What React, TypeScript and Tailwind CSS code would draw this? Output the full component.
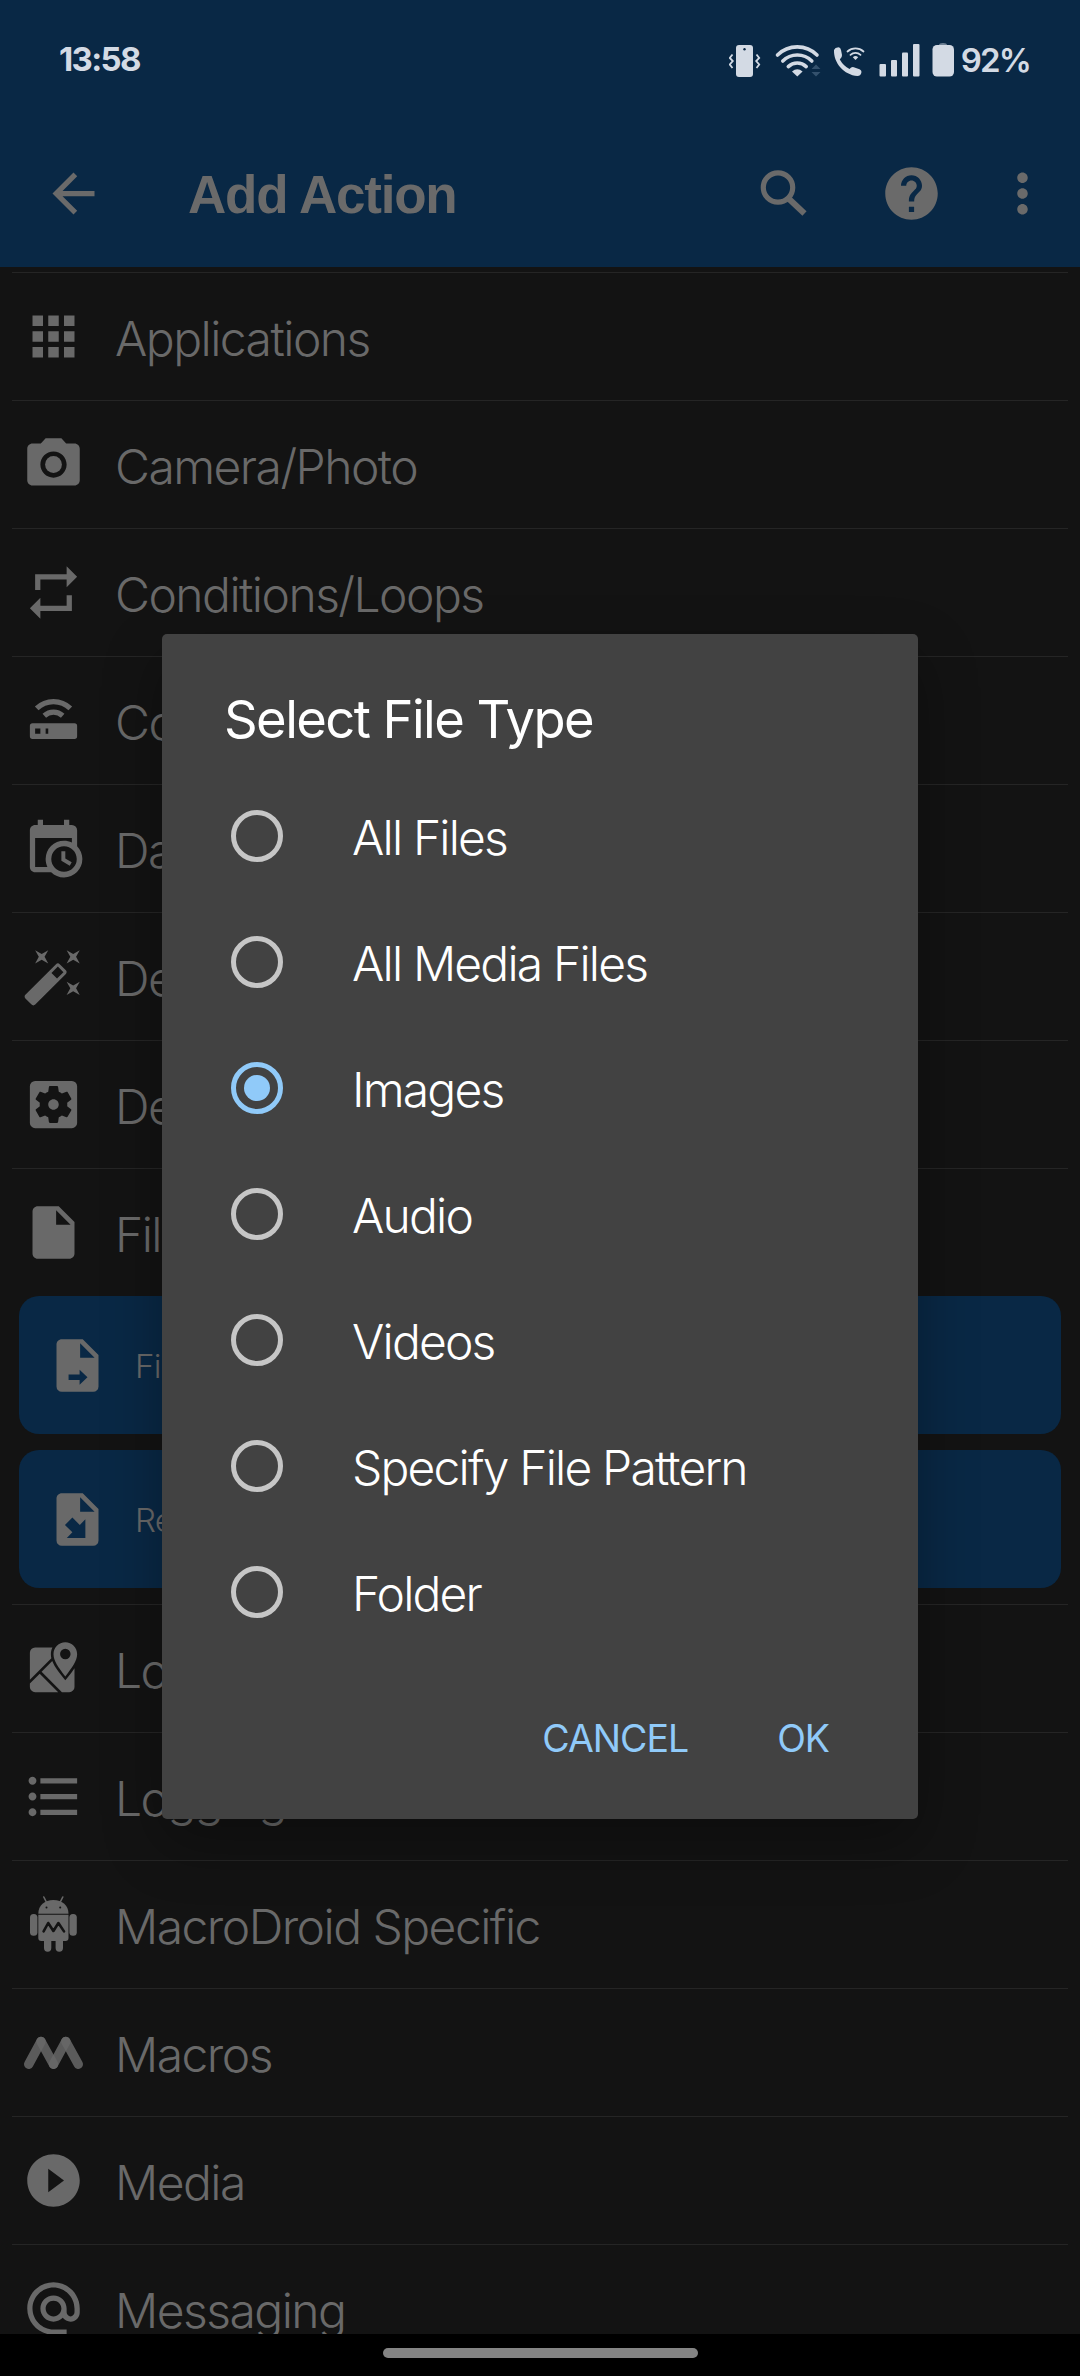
import type { ReactNode } from "react";
import {
    MdAlternateEmail,
    MdApps,
    MdArrowBack,
    MdFormatListBulleted,
    MdHelp,
    MdInsertDriveFile,
    MdMoreVert,
    MdPhotoCamera,
    MdPlayCircleFilled,
    MdRepeat,
    MdSettingsApplications,
} from "react-icons/md";

const ICON = "w-[63px] h-[63px] shrink-0";

function PathIcon({ d }: { d: string }) {
    return (
        <svg viewBox="0 0 24 24" fill="currentColor" className={ICON}>
            <path fillRule="evenodd" d={d} />
        </svg>
    );
}

const CALENDAR_CLOCK = "M15,13H16.5V15.82L18.94,17.23L18.19,18.53L15,16.69V13M19,8H5V19H9.67C9.24,18.09 9,17.07 9,16A7,7 0 0,1 16,9C17.07,9 18.09,9.24 19,9.67V8M5,21C3.89,21 3,20.1 3,19V5C3,3.89 3.89,3 5,3H6V1H8V3H16V1H18V3H19A2,2 0 0,1 21,5V11.1C22.24,12.36 23,14.09 23,16A7,7 0 0,1 16,23C14.09,23 12.36,22.24 11.1,21H5M16,11.15A4.85,4.85 0 0,0 11.15,16C11.15,18.68 13.32,20.85 16,20.85A4.85,4.85 0 0,0 20.85,16C20.85,13.32 18.68,11.15 16,11.15Z";
const WAND = "M7.5,5.6L5,7L6.4,4.5L5,2L7.5,3.4L10,2L8.6,4.5L10,7L7.5,5.6M19.5,15.4L22,14L20.6,16.5L22,19L19.5,17.6L17,19L18.4,16.5L17,14L19.5,15.4M22,2L20.6,4.5L22,7L19.5,5.6L17,7L18.4,4.5L17,2L19.5,3.4L22,2M13.34,12.78L15.78,10.34L13.66,8.22L11.22,10.66L13.34,12.78M14.37,7.29L16.71,9.63C17.1,10 17.1,10.65 16.71,11.04L5.04,22.71C4.65,23.1 4,23.1 3.63,22.71L1.29,20.37C0.9,20 0.9,19.35 1.29,18.96L12.96,7.29C13.35,6.9 14,6.9 14.37,7.29Z";
const MAP = "M5,4A2,2 0 0,0 3,6V16.29L11.18,8.11C11.06,7.59 11,7.07 11,6.53C11,5.62 11.2,4.76 11.59,4H5M18,21A2,2 0 0,0 20,19V11.86C19.24,13 18.31,14.21 17.29,15.5L16.5,16.5L15.72,15.5C14.39,13.85 13.22,12.32 12.39,10.91C12.05,10.33 11.76,9.76 11.53,9.18L7.46,13.25L15.21,21H18M3,19A2,2 0 0,0 5,21H13.79L6.75,13.96L3,17.71V19M16.5,15C19.11,11.63 21,9.1 21,6.57C21,4.05 19,2 16.5,2C14,2 12,4.05 12,6.57C12,9.1 13.87,11.63 16.5,15M16.5,8.5A2,2 0 0,1 14.5,6.5A2,2 0 0,1 16.5,4.5A2,2 0 0,1 18.5,6.5A2,2 0 0,1 16.5,8.5Z";
const FILE_MOVE = "M14,2H6C4.89,2 4,2.9 4,4V20A2,2 0 0,0 6,22H18A2,2 0 0,0 20,20V8L14,2M8.6,15.4H12.8V13.6L15.8,16.5L12.8,19.3V17.5H8.6V15.4M13,9V3.5L18.5,9H13Z";
const FILE_IMPORT = "M14,2H6C4.89,2 4,2.9 4,4V20A2,2 0 0,0 6,22H18A2,2 0 0,0 20,20V8L14,2M10.05,11.22L12.88,14.05L15,11.93V19H7.93L10.05,16.88L7.22,14.05L10.05,11.22M13,9V3.5L18.5,9H13Z";

function RouterIcon() {
    return (
        <svg viewBox="0 0 24 24" fill="none" className={ICON}>
            <path
                fill="currentColor"
                fillRule="evenodd"
                d="M4 13H20A1 1 0 0 1 21 14V18A1 1 0 0 1 20 19H4A1 1 0 0 1 3 18V14A1 1 0 0 1 4 13ZM5 15V17H7V15ZM9 15V17H10V15Z"
            />
            <path d="M5.6 7.4A9.2 9.2 0 0 1 18.4 7.4M8.5 10.2A5.2 5.2 0 0 1 15.5 10.2" stroke="currentColor" strokeWidth="2" />
        </svg>
    );
}

function DroidIcon() {
    return (
        <svg viewBox="0 0 63 63" fill="currentColor" className={ICON}>
            <path d="M21.8 4L24.6 9.5M40.8 4L38 9.5" stroke="currentColor" strokeWidth="1.6" strokeLinecap="round" />
            <path d="M16.3 20.7C16.3 12.5 22.5 7 31.4 7S46.5 12.5 46.5 20.7Z" />
            <rect x="8" y="21" width="7.4" height="21.8" rx="3.5" />
            <rect x="47.4" y="21" width="7.4" height="21.8" rx="3.5" />
            <path d="M16.3 21.8H46.5V45Q46.5 48 43.5 48H41V55A3.6 3.6 0 0 1 33.6 55V48H29.3V55A3.6 3.6 0 0 1 22 55V48H19.3Q16.3 48 16.3 45Z" />
            <circle cx="24.5" cy="14.4" r="1" fill="#131313" />
            <circle cx="38.2" cy="14.4" r="1" fill="#131313" />
            <path d="M21.6 38.4L26.2 30L31.4 38L36.4 30L42 38.4" fill="none" stroke="#131313" strokeWidth="2.6" strokeLinecap="round" strokeLinejoin="round" />
        </svg>
    );
}

function MacrosIcon() {
    return (
        <svg viewBox="0 0 63 63" fill="none" stroke="#696969" strokeWidth="9.4" strokeLinecap="round" className={ICON}>
            <path opacity=".85" d="M6.7 43.2L19 20.4" />
            <path opacity=".85" d="M19 20.4L31.5 43.2" />
            <path opacity=".85" d="M31.5 43.2L43.8 20.4" />
            <path opacity=".85" d="M43.8 20.4L56.3 43.2" />
        </svg>
    );
}

function Row({ icon, label }: { icon: ReactNode; label: string }) {
    return (
        <div className="h-32 shrink-0 mx-3 pl-[10px] border-t border-[#252525] flex items-center">
            {icon}
            <p className="ml-[30px] pt-1 text-[48px] leading-[58px] font-light tracking-[-0.032em]">{label}</p>
        </div>
    );
}

function Card({ icon, label }: { icon: ReactNode; label: string }) {
    return (
        <div className="h-[138px] shrink-0 mx-[19px] pl-[27px] rounded-[20px] bg-[#092845] flex items-center">
            {icon}
            <p className="ml-[26px] pt-px text-[33px] leading-10 font-light tracking-[-0.02em]">{label}</p>
        </div>
    );
}

function StatusBar() {
    return (
        <div className="h-[120px] pl-[59px] pr-[50px] flex items-center text-[#d3dae4]">
            <p className="pb-0.5 text-[33px] leading-10 font-bold tracking-[-0.05em]">13:58</p>
            <div className="ml-auto flex items-center">
                <svg viewBox="0 0 192 36" className="w-[192px] h-[36px] mr-[11px]" fill="currentColor">
                    {/* vibrate */}
                    <rect x="7" y="3" width="17" height="32" rx="3" />
                    <circle cx="15.5" cy="7.2" r="1.2" fill="#092845" />
                    <path d="M3.5 11.5L.8 15L3.8 18L.8 21.5L3.5 25M27.5 11.5L30.2 15L27.2 18L30.2 21.5L27.5 25" transform="translate(0 1)" fill="none" stroke="currentColor" strokeWidth="1.8" />
                    {/* wifi */}
                    <g fill="none" stroke="currentColor" strokeWidth="3.6" strokeLinecap="round">
                        <path d="M48.5 13A28 28 0 0 1 88 13" />
                        <path d="M53.8 19A20.5 20.5 0 0 1 82.8 19" />
                        <path d="M59.3 24.6A13 13 0 0 1 77.2 24.6" />
                    </g>
                    <path d="M63 29.5Q68.3 25 73.6 29.5L68.3 34.5Z" />
                    <path d="M82.5 27L87 22.5L91.5 27ZM82.5 30L87 34.5L91.5 30Z" fill="#34516d" />
                    {/* wifi calling */}
                    <path d="M105 8Q106 5.5 109.5 5.3Q111.5 5.5 112 8L113 13Q113.3 15.5 110.8 17.5Q114.5 24 120.5 27Q122.5 24.5 124.8 25.2L130.5 27.3Q133 28.5 132.3 31Q131.5 34 128.5 34C115 33 104.5 21 105 8Z" />
                    <g fill="none" stroke="currentColor" strokeWidth="1.8" strokeLinecap="round">
                        <path d="M118.5 9.5A12 12 0 0 1 134.5 9.5" />
                        <path d="M121.5 12.8A7.5 7.5 0 0 1 131.5 12.8" />
                    </g>
                    <path d="M123.8 15.2Q126.5 13 129.2 15.2L126.5 18Z" />
                    {/* signal */}
                    <rect x="150.5" y="22" width="6.5" height="12.5" rx="1" />
                    <rect x="162" y="18" width="6" height="16.5" rx="1" />
                    <rect x="173" y="10.5" width="6" height="24" rx="1" />
                    <rect x="184" y="2" width="6.5" height="32.5" rx="1" />
                </svg>
                <svg viewBox="0 0 22 36" className="w-[22px] h-[36px] mr-[7px]" fill="currentColor">
                    <path opacity=".5" d="M7 3Q7 1 11 1T15 3Z" />
                    <rect x=".5" y="3" width="21.5" height="31.5" rx="4.5" />
                </svg>
                <p className="text-[33px] leading-10 font-semibold tracking-[-0.055em]">92%</p>
            </div>
        </div>
    );
}

function Header() {
    return (
        <header className="h-[267px] shrink-0 bg-[#092845]">
            <StatusBar />
            <div className="h-[147px] pl-[42px] pr-[26px] flex items-center text-[#6a6a6a]">
                <MdArrowBack className={ICON} />
                <h1 className="ml-[83px] pt-0.5 text-[53px] leading-[60px] font-bold tracking-[-0.023em] font-['Liberation_Sans',sans-serif]">
                    Add Action
                </h1>
                <div className="ml-auto flex items-center">
                    <svg viewBox="0 0 63 63" className={ICON} fill="none" stroke="currentColor">
                        <circle cx="26" cy="25.5" r="14.7" strokeWidth="5.2" />
                        <path d="M36.5 36.5L52.5 51.5" strokeWidth="6" />
                    </svg>
                    <MdHelp className={`${ICON} ml-[65px]`} />
                    <MdMoreVert className={`${ICON} ml-[48px]`} />
                </div>
            </div>
        </header>
    );
}

const FILE_TYPES = ["All Files", "All Media Files", "Images", "Audio", "Videos", "Specify File Pattern", "Folder"];

function Radio({ checked }: { checked: boolean }) {
    return checked ? (
        <div className="w-[52px] h-[52px] rounded-full border-[5px] border-[#90caf9] flex items-center justify-center">
            <div className="w-[26px] h-[26px] rounded-full bg-[#90caf9]" />
        </div>
    ) : (
        <div className="w-[52px] h-[52px] rounded-full border-[5px] border-[#c6c6c6]" />
    );
}

function FileTypeDialog() {
    return (
        <div className="absolute left-[162px] top-[634px] w-[756px] h-[1185px] rounded-[5px] bg-[#424242] shadow-[0_24px_60px_rgba(0,0,0,0.3)] flex flex-col">
            <h2 className="mt-[53px] ml-[62px] text-[52.5px] leading-[64px] text-white tracking-[-0.03em]">Select File Type</h2>
            <div className="mt-[22px] flex flex-col">
                {FILE_TYPES.map((type) => (
                    <div key={type} className="h-[126px] pl-[69px] flex items-center">
                        <Radio checked={type === "Images"} />
                        <p className="ml-[69px] pt-1 text-[48px] leading-[58px] font-light text-white tracking-[-0.038em]">{type}</p>
                    </div>
                ))}
            </div>
            <div className="mt-[54px] pr-[89px] flex justify-end gap-[89px] text-[37.5px] leading-[60px] text-[#90caf9] tracking-[-0.027em]">
                <button>CANCEL</button>
                <button>OK</button>
            </div>
        </div>
    );
}

export default function App() {
    return (
        <div className="relative w-[1080px] h-[2376px] overflow-hidden bg-[#131313] text-[#696969] flex flex-col font-['Inter',sans-serif]">
            <Header />
            <main className="flex-1 min-h-0 overflow-hidden pt-[5px] flex flex-col">
                <Row icon={<MdApps className={ICON} />} label="Applications" />
                <Row icon={<MdPhotoCamera className={ICON} />} label="Camera/Photo" />
                <Row icon={<MdRepeat className={ICON} />} label="Conditions/Loops" />
                <Row icon={<RouterIcon />} label="Connectivity" />
                <Row icon={<PathIcon d={CALENDAR_CLOCK} />} label="Date/Time" />
                <Row icon={<PathIcon d={WAND} />} label="Device Actions" />
                <Row icon={<MdSettingsApplications className={ICON} />} label="Device Settings" />
                <Row icon={<MdInsertDriveFile className={ICON} />} label="Files" />
                <div className="flex flex-col gap-4 pb-4">
                    <Card icon={<PathIcon d={FILE_MOVE} />} label="File Operation" />
                    <Card icon={<PathIcon d={FILE_IMPORT} />} label="Read From File" />
                </div>
                <Row icon={<PathIcon d={MAP} />} label="Location" />
                <Row icon={<MdFormatListBulleted className={ICON} />} label="Logging" />
                <Row icon={<DroidIcon />} label="MacroDroid Specific" />
                <Row icon={<MacrosIcon />} label="Macros" />
                <Row icon={<MdPlayCircleFilled className={ICON} />} label="Media" />
                <Row icon={<MdAlternateEmail className={ICON} />} label="Messaging" />
            </main>
            <div className="h-[42px] shrink-0 bg-black pt-[14px] flex justify-center">
                <div className="w-[315px] h-[10px] rounded-full bg-[#848484]" />
            </div>
            <FileTypeDialog />
        </div>
    );
}
